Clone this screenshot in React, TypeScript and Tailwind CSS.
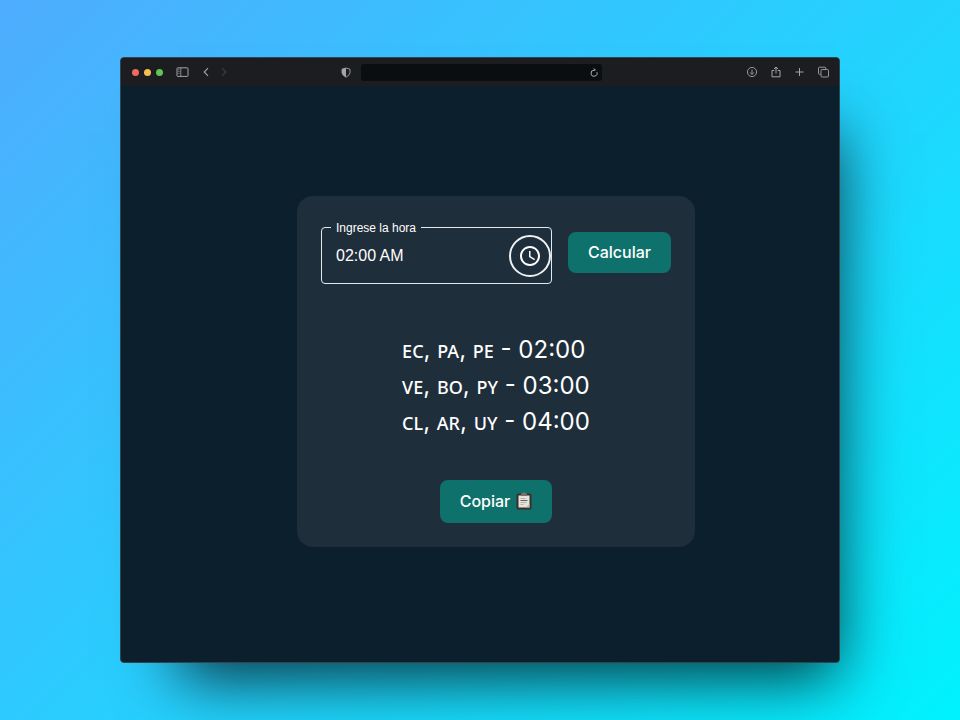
import { Fragment, useState } from "react";

const zones = [
  { countries: ["EC", "PA", "PE"], time: "02:00" },
  { countries: ["VE", "BO", "PY"], time: "03:00" },
  { countries: ["CL", "AR", "UY"], time: "04:00" },
];

function BrowserBar() {
  return (
    <header className="flex h-7 items-center bg-[#1b1d21] pr-[9px] pl-[11px] text-[#a3a5a7]">
      <div className="flex flex-1 items-center">
        <div className="flex gap-[5px]">
          <span className="size-[7px] rounded-full bg-[#ec6a5e]" />
          <span className="size-[7px] rounded-full bg-[#f4bf4f]" />
          <span className="size-[7px] rounded-full bg-[#61c554]" />
        </div>
        <button type="button" aria-label="Barra lateral" className="ml-[13px]">
          <svg width="13" height="10" viewBox="0 0 13 10" fill="none" stroke="currentColor">
            <rect x="1" y="0.8" width="11" height="8.6" rx="0.8" />
            <path d="M4.8 1v8M2.3 2.7h1.2M2.3 4.5h1.2M2.3 6.3h1.2" strokeWidth="0.8" />
          </svg>
        </button>
        <button type="button" aria-label="Atrás" className="ml-[14px]">
          <svg width="6" height="10" viewBox="0 0 6 10" fill="none" stroke="currentColor" strokeWidth="1.1">
            <path d="M5 1.2 1.2 5 5 8.8" />
          </svg>
        </button>
        <button type="button" aria-label="Adelante" className="ml-3 text-[#3c3f42]">
          <svg width="6" height="10" viewBox="0 0 6 10" fill="none" stroke="currentColor" strokeWidth="1.1">
            <path d="M1 1.2 4.8 5 1 8.8" />
          </svg>
        </button>
        <button type="button" aria-label="Privacidad" className="mr-[10px] ml-auto">
          <svg width="10" height="11" viewBox="0 0 10 11">
            <path d="M5 1 9 2.2v3.6Q8.6 8.4 5 10.2 1.4 8.4 1 5.8V2.2Z" fill="none" stroke="currentColor" strokeWidth="0.9" />
            <path d="M5 1v9.2Q1.4 8.4 1 5.8V2.2Z" fill="currentColor" />
          </svg>
        </button>
      </div>
      <div className="flex h-[17px] w-[241px] items-center justify-end rounded-[3px] bg-[#0b0e11] pr-1">
        <button type="button" aria-label="Recargar" className="text-[#c2c4c5]">
          <svg width="8" height="9" viewBox="0 0 8 9" fill="none" stroke="currentColor" strokeWidth="0.9">
            <path d="M6.900 4.200A3 3 0 1 1 4 2.200H5.200M3.800.4 5.500 2.200" />
          </svg>
        </button>
      </div>
      <div className="flex flex-1 items-center justify-end gap-3">
        <button type="button" aria-label="Descargas">
          <svg width="12" height="12" viewBox="0 0 12 12" fill="none" stroke="currentColor" strokeWidth="0.9">
            <circle cx="6" cy="6" r="4.6" />
            <path d="M6 3.5v4.8M4 6.4l2 2 2-2" />
          </svg>
        </button>
        <button type="button" aria-label="Compartir">
          <svg width="12" height="12" viewBox="0 0 12 12" fill="none" stroke="currentColor">
            <path d="M4.2 4.5H2v6.3h8V4.5H7.8M6 7.5V1M4 3l2-2 2 2" />
          </svg>
        </button>
        <button type="button" aria-label="Nueva pestaña">
          <svg width="11" height="12" viewBox="0 0 11 12" fill="none" stroke="currentColor">
            <path d="M5.5 2v8M1.5 6h8" />
          </svg>
        </button>
        <button type="button" aria-label="Pestañas">
          <svg width="13" height="12" viewBox="0 0 13 12" fill="none" stroke="currentColor" strokeWidth="0.9">
            <rect x="4" y="3.5" width="7.5" height="7.5" rx="1" />
            <path d="M3.7 8.3H2.5q-1 0-1-1V2.2q0-1 1-1h5.3q1 0 1 1v1" />
          </svg>
        </button>
      </div>
    </header>
  );
}

function ClipboardIcon() {
  return (
    <svg width="16" height="18" viewBox="0 0 16 18" aria-hidden="true">
      <rect x="0.5" y="1.5" width="15" height="16" rx="1.5" fill="#38302a" />
      <path d="M2.5 3.5h11v12h-11z" fill="#e6e2dd" />
      <path d="M5 4V2q0-.7.8-.7h.9Q7 0 8 0t1.300 1.300h.9q.8 0 .8.7v2z" fill="#77736d" />
      <path d="M4.500 6.500h5M4.500 10.500h6M4.500 12.500h3" stroke="#aaa6a2" strokeWidth="0.800" />
      <path d="M4.500 8.500h7" stroke="#66625f" />
      <path d="M10 15.500 13.500 12v3.500z" fill="#b9b3ac" />
    </svg>
  );
}

export default function App() {
  const [hour, setHour] = useState("02:00 AM");
  return (
    <div className="flex min-h-screen flex-col bg-linear-[135deg,#4facfe,#00f2fe] px-[12.5%] py-[57px] font-['Inter',sans-serif] text-white">
      <div className="flex flex-1 flex-col overflow-hidden rounded-[4px] border border-[#34444e] bg-[#0c1f2c] shadow-[28px_46px_60px_-30px_rgba(0,0,0,0.75)]">
        <BrowserBar />
        <main className="flex flex-1 items-center justify-center pb-1.5 pl-8">
          <section className="flex flex-col items-center rounded-2xl bg-[#1f2e3b] p-6">
            <form className="flex items-start gap-4" onSubmit={(e) => e.preventDefault()}>
              <fieldset className="flex h-16 w-[231px] min-w-0 items-center rounded-[4px] border border-[#e4e9ec] pb-[6px] pl-[9px] font-['Liberation_Sans',sans-serif]">
                <legend className="px-[5px] text-xs leading-4">
                  <label htmlFor="hour">Ingrese la hora</label>
                </legend>
                <input
                  id="hour"
                  value={hour}
                  onChange={(e) => setHour(e.target.value)}
                  className="min-w-0 flex-1 bg-transparent pl-[5px] text-base outline-none"
                />
                <button
                  type="button"
                  aria-label="Elegir hora"
                  className="flex size-[42px] shrink-0 items-center justify-center rounded-full border-2 border-[#eef1f2]"
                >
                  <svg width="24" height="24" viewBox="0 0 24 24" fill="currentColor">
                    <path d="M11.990 2C6.470 2 2 6.480 2 12s4.470 10 9.990 10C17.520 22 22 17.520 22 12S17.520 2 11.990 2zM12 20c-4.420 0-8-3.580-8-8s3.580-8 8-8 8 3.580 8 8-3.580 8-8 8zm.5-13H11v6l5.250 3.150.75-1.230-4.500-2.670z" />
                  </svg>
                </button>
              </fieldset>
              <button type="submit" className="mt-3 h-[41px] rounded-lg bg-[#0e716c] px-5 text-base font-medium">
                Calcular
              </button>
            </form>
            <ul className="mt-12 text-2xl leading-9">
              {zones.map((z) => (
                <li key={z.time}>
                  {z.countries.map((code, i) => (
                    <Fragment key={code}>
                      {i > 0 && ", "}
                      <span className="font-['Noto_Sans',sans-serif] text-lg leading-none font-medium">{code}</span>
                    </Fragment>
                  ))}
                  {" - "}
                  {z.time}
                </li>
              ))}
            </ul>
            <button type="button" className="mt-10 flex h-[43px] items-center gap-[6px] rounded-lg bg-[#0e716c] px-5 text-base font-medium">
              Copiar
              <ClipboardIcon />
            </button>
          </section>
        </main>
      </div>
    </div>
  );
}
